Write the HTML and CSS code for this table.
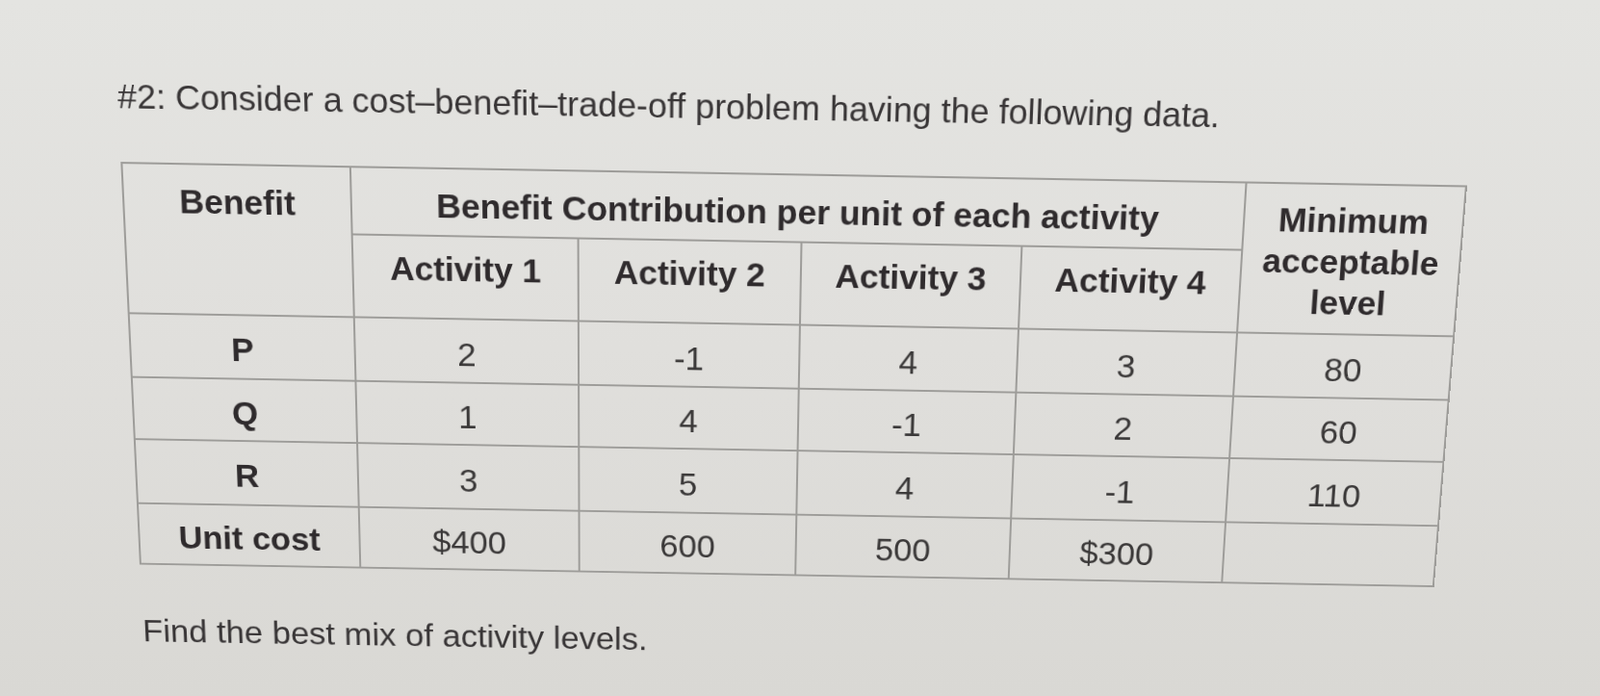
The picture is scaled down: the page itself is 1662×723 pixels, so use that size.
FILE: index.html
```html
<!DOCTYPE html>
<html lang="en">
<head>
<meta charset="utf-8">
<title>Cost–benefit–trade-off problem</title>
<link rel="stylesheet" href="styles.css">
</head>
<body>
<div class="page">
  <p class="title">#2: Consider a cost–benefit–trade-off problem having the following data.</p>
  <table class="data">
    <colgroup>
      <col class="c-benefit">
      <col class="c-a1">
      <col class="c-a2">
      <col class="c-a3">
      <col class="c-a4">
      <col class="c-min">
    </colgroup>
    <tr class="r-h1">
      <th rowspan="2" class="top">Benefit</th>
      <th colspan="4" class="group">Benefit Contribution per unit of each activity</th>
      <th rowspan="2" class="min">Minimum<br>acceptable<br>level</th>
    </tr>
    <tr class="r-h2">
      <th class="act">Activity 1</th>
      <th class="act">Activity 2</th>
      <th class="act">Activity 3</th>
      <th class="act">Activity 4</th>
    </tr>
    <tr class="r-p">
      <th>P</th><td>2</td><td>-1</td><td>4</td><td>3</td><td>80</td>
    </tr>
    <tr class="r-q">
      <th>Q</th><td>1</td><td>4</td><td>-1</td><td>2</td><td>60</td>
    </tr>
    <tr class="r-r">
      <th>R</th><td>3</td><td>5</td><td>4</td><td>-1</td><td>110</td>
    </tr>
    <tr class="r-cost">
      <th>Unit cost</th><td>$400</td><td>600</td><td>500</td><td>$300</td><td></td>
    </tr>
  </table>
  <p class="footer">Find the best mix of activity levels.</p>
</div>
</body>
</html>
```

FILE: styles.css
```css
html, body {
  margin: 0;
  padding: 0;
  width: 100%;
  height: 100%;
  overflow: hidden;
}

body {
  background: linear-gradient(180deg, #e4e4e1 0%, #e0dfdc 50%, #d9d8d4 100%);
  font-family: "Liberation Sans", Arial, sans-serif;
  color: #353233;
}

/* the whole sheet is seen slightly from below and tilted, like the photo */
.page {
  padding: 91px 0 0 135px;
  transform-origin: 820.5px 389px;
  transform: rotate(1deg) perspective(2650px) rotateX(-14deg);
}

.title {
  margin: 0;
  font-size: 35px;
  line-height: 40px;
  color: #383536;
  white-space: nowrap;
}

.data {
  margin: 47px 0 0 0;
  width: 1370px;
  table-layout: fixed;
  border-collapse: collapse;
}

.c-benefit { width: 233px; }
.c-a1 { width: 232px; }
.c-a2 { width: 229px; }
.c-a3 { width: 226px; }
.c-a4 { width: 226px; }
.c-min { width: 224px; }

.data th,
.data td {
  border: 2px solid #9d9c99;
  padding: 0;
  text-align: center;
  vertical-align: middle;
  line-height: 40px;
  font-size: 35px;
}

.data th {
  font-weight: bold;
  color: #2f2b2d;
}

.data td {
  font-weight: normal;
  color: #3a3838;
  padding-top: 7px;
}

.data th.top {
  vertical-align: top;
  padding-top: 18px;
}

.data th.group {
  padding-top: 7px;
}

.data th.act {
  padding-bottom: 17px;
}

.data th.min {
  line-height: 43px;
  padding-top: 3px;
}

.r-p th,
.r-q th,
.r-r th,
.r-cost th {
  padding-top: 6px;
}

.r-h1 { height: 70px; }
.r-h2 { height: 87px; }
.r-p { height: 68px; }
.r-q { height: 67px; }
.r-r { height: 70px; }
.r-cost { height: 67px; }

.footer {
  margin: 54px 0 0 0;
  font-size: 35.5px;
  line-height: 40px;
  color: #383536;
}
```
